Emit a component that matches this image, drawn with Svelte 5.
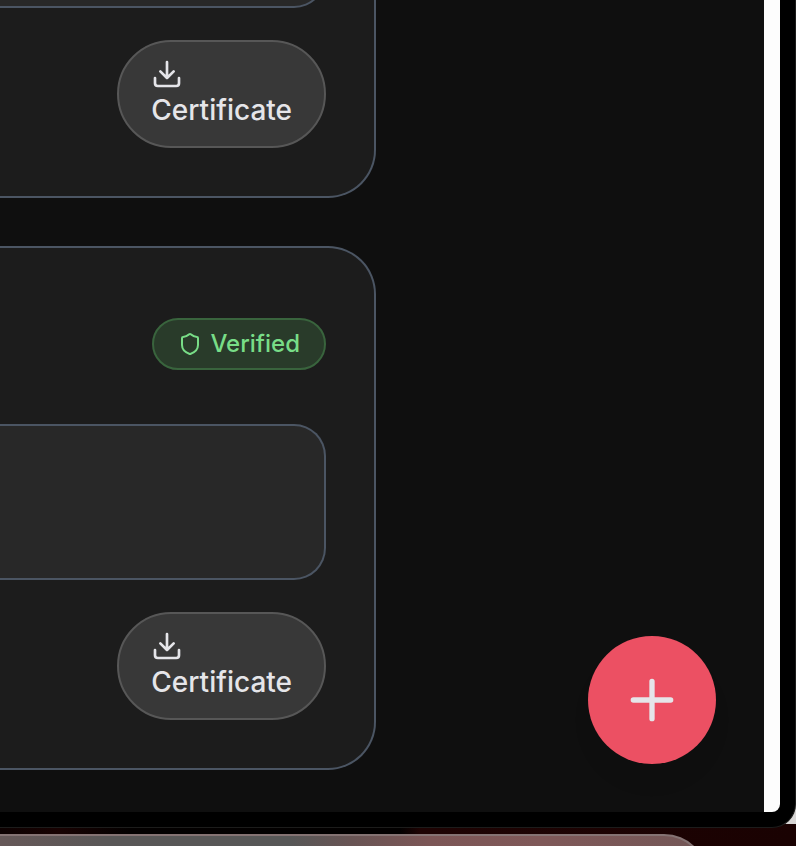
<script>
  const certificates = [
    { id: 1, verified: false },
    { id: 2, verified: true },
  ];
</script>

<div class="desktop">
  <div class="window">
    <div class="screen">
      <main class="page">
        <div class="cards">
          {#each certificates as item (item.id)}
            <article class="card">
              <header class="card-head">
                {#if item.verified}
                  <span class="badge">
                    <svg width="24" height="24" viewBox="0 0 24 24" aria-hidden="true">
                      <path d="M20 13c0 5-3.5 7.5-7.66 8.95a1 1 0 0 1-.67-.01C7.5 20.5 4 18 4 13V6a1 1 0 0 1 1-1c2 0 4.5-1.2 6.24-2.72a1.17 1.17 0 0 1 1.52 0C14.51 3.81 17 5 19 5a1 1 0 0 1 1 1z" />
                    </svg>
                    Verified
                  </span>
                {/if}
              </header>
              <div class="details"></div>
              <button class="download" type="button">
                <svg width="32" height="32" viewBox="0 0 24 24" aria-hidden="true">
                  <path d="M21 15v4a2 2 0 0 1-2 2H5a2 2 0 0 1-2-2v-4M7 10l5 5 5-5M12 15V3" />
                </svg>
                <span>Certificate</span>
              </button>
            </article>
          {/each}
        </div>
        <button class="add" type="button" aria-label="Add">
          <svg width="64" height="64" viewBox="0 0 24 24" aria-hidden="true">
            <path d="M5 12h14M12 5v14" />
          </svg>
        </button>
      </main>
    </div>
  </div>
  <div class="dock-area"><div class="dock"></div></div>
</div>

<style>
  :global(body) {
    margin: 0;
    background: #180202;
  }

  .desktop {
    height: 100vh;
    display: flex;
    flex-direction: column;
    overflow: hidden;
    background:
      linear-gradient(#d8d6d5, #d8d6d5) right top / 40px calc(100% - 22px) no-repeat,
      linear-gradient(90deg, #0d0101 0, #180202 60px, #030000 130px, #020000 400px, #1e0303 420px, #1a0202 100%);
    font-family: Inter, "Liberation Sans", sans-serif;
    -webkit-font-smoothing: antialiased;
  }

  .window {
    flex: 1;
    min-height: 0;
    display: flex;
    box-sizing: border-box;
    padding: 0 15px 15px 0;
    border: solid #1c1c1b;
    border-width: 0 1px 1px 0;
    border-radius: 0 0 24px 0;
    background: #000;
  }

  .screen {
    flex: 1;
    display: flex;
    padding-right: 16px;
    border-radius: 0 0 8px 0;
    background: #fdfdfd;
  }

  .page {
    flex: 1;
    display: flex;
    align-items: flex-end;
    justify-content: space-between;
    overflow: hidden;
    box-sizing: border-box;
    padding: 0 48px 0 0;
    background: #0f0f0f;
  }

  .cards {
    flex: 1;
    display: flex;
    flex-direction: column;
    gap: 48px;
    margin-right: 212px;
    padding-bottom: 42px;
  }

  .card {
    display: flex;
    flex-direction: column;
    align-items: flex-end;
    gap: 32px;
    padding: 48px 48px 48px 0;
    border: solid #4b5563;
    border-width: 2px 2px 2px 0;
    border-radius: 0 48px 48px 0;
    background: #1c1c1c;
  }

  .card-head {
    height: 96px;
    display: flex;
    align-items: center;
  }

  .badge {
    display: flex;
    align-items: center;
    gap: 8px;
    padding: 8px 24px;
    border: 2px solid #39643d;
    border-radius: 26px;
    background: #293b2a;
    color: #78dd87;
    font-size: 24px;
    font-weight: 500;
    line-height: 32px;
  }

  svg {
    display: block;
    fill: none;
    stroke: currentColor;
    stroke-width: 2;
    stroke-linecap: round;
    stroke-linejoin: round;
  }

  .details {
    align-self: stretch;
    box-sizing: border-box;
    height: 156px;
    border: solid #4b5563;
    border-width: 2px 2px 2px 0;
    border-radius: 0 32px 32px 0;
    background: #282828;
  }

  .download {
    display: flex;
    flex-direction: column;
    align-items: flex-start;
    padding: 16px 32px;
    border: 2px solid #575757;
    border-radius: 54px;
    background: #383838;
    color: #e5e5e9;
    font-family: inherit;
    font-size: 28px;
    font-weight: 500;
    line-height: 40px;
  }

  .add {
    display: grid;
    place-items: center;
    flex: none;
    width: 128px;
    height: 128px;
    margin-bottom: 48px;
    padding: 0;
    border: 0;
    border-radius: 50%;
    background: #ec5063;
    color: #e5e5e9;
    box-shadow: 0 20px 24px -6px rgba(0, 0, 0, 0.08);
  }

  .dock-area {
    flex: none;
    height: 12px;
    margin-top: 6px;
    padding-right: 88px;
    overflow: hidden;
  }

  .dock {
    box-sizing: border-box;
    height: 96px;
    border: solid #857373;
    border-width: 2px 2px 0 0;
    border-radius: 0 44px 0 0;
    background: linear-gradient(90deg, #665858 0, #595757 110px, #575757 290px, #685454 350px, #7c5656 430px, #7f5858 540px, #735757 100%);
  }
</style>
